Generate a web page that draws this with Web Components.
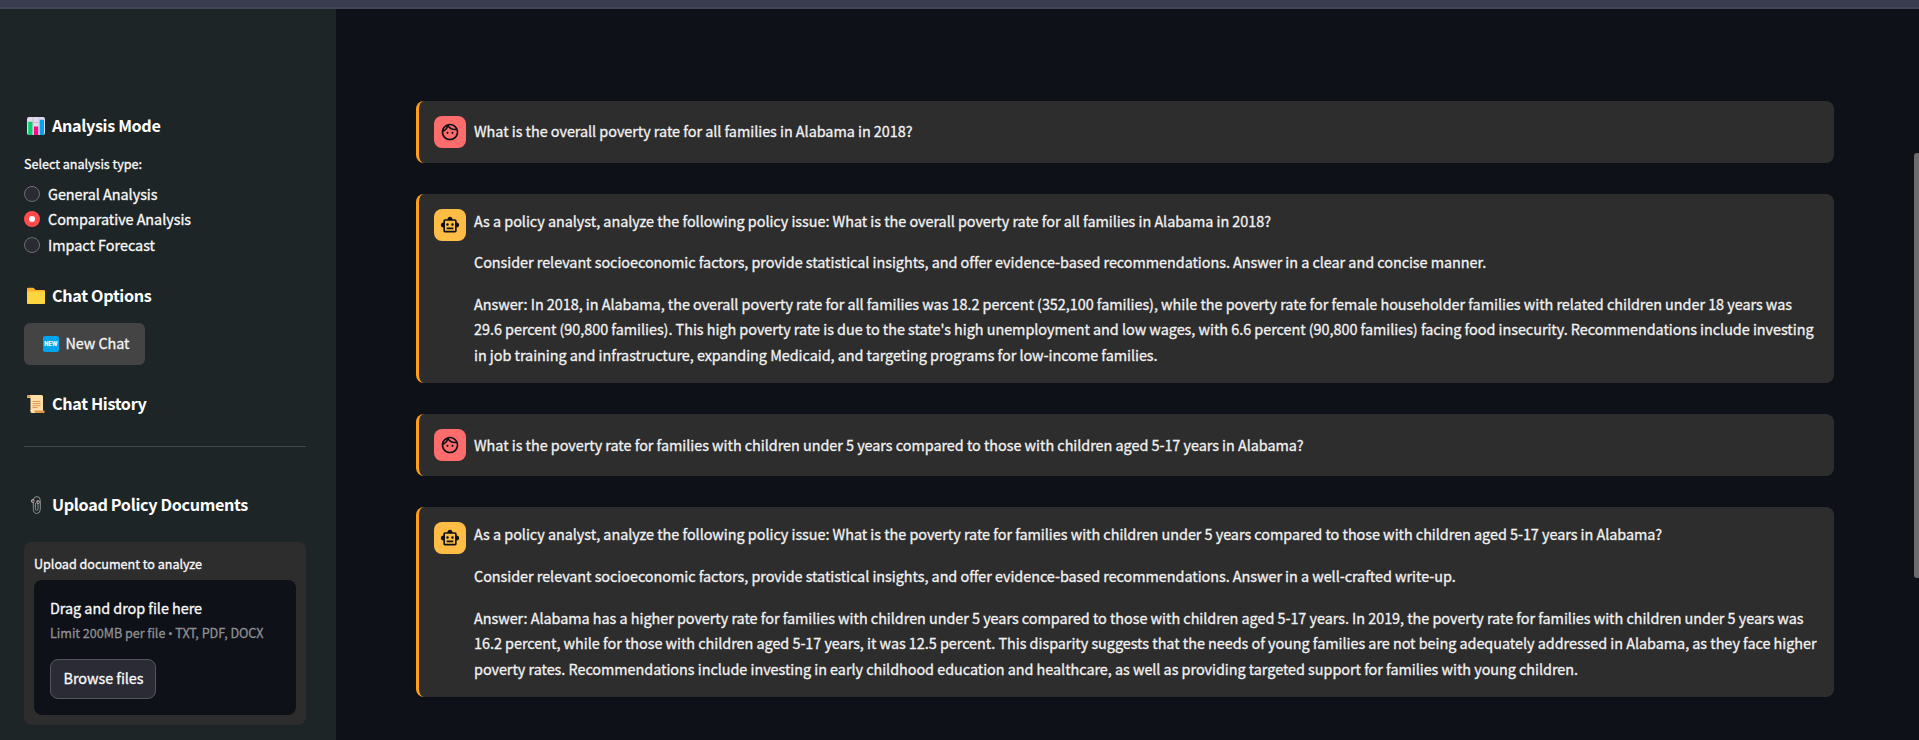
<!DOCTYPE html>
<html lang="en">
<head>
<meta charset="utf-8">
<title>Policy Analysis Chat</title>
<style>
html,body{margin:0;height:100%;overflow:hidden;background:#0e1117}
body{font-family:"Noto Sans CJK SC","Noto Sans",sans-serif;color:#fafafa;font-size:14.4px;line-height:25.6px;-webkit-text-stroke:.3px currentColor}
</style>
</head>
<body>
<policy-app></policy-app>
<script>
const define=(name,html,setup)=>{
  const t=document.createElement('template');t.innerHTML=html;
  customElements.define(name,class extends HTMLElement{
    connectedCallback(){
      if(this.shadowRoot)return;
      this.attachShadow({mode:'open'}).append(t.content.cloneNode(true));
      if(setup)setup(this,this.shadowRoot);
    }
  });
};

/* A single line of text, tracked so that it fills the width in its "w" attribute. */
define('text-line',`<style>:host{display:block;white-space:nowrap}span{display:inline-block}</style><span><slot></slot></span>`,(el,root)=>{
  const s=root.querySelector('span'),n=el.textContent.length;
  const w=parseFloat(el.getAttribute('w'));
  if(w&&n>1){const natural=s.getBoundingClientRect().width;s.style.letterSpacing=((w-natural)/n)+'px';}
});

const ICONS={
 chart:`<svg viewBox="0 0 18 18"><rect width="18" height="18" rx="2" fill="#e1d8ec"/><path d="M0 5.5h18M6 0v18M12.2 0v18" stroke="#c3b7d3" stroke-width=".7"/><path d="M1.2 4.7h4.2V18H2a1 1 0 0 1-.8-1z" fill="#00d26a"/><path d="M7 9.5h4.2V18H7z" fill="#f70a8d"/><path d="M12.8 2.8H17V17a1 1 0 0 1-1 1h-3.200z" fill="#00a6ed"/></svg>`,
 folder:`<svg viewBox="0 0 18 18"><path d="M0 1.800Q0 .8 1 .8h5q.7 0 1.200.6L8.700 3H17q1 0 1 1v5H0z" fill="#ffb02e"/><rect y="4.600" width="18" height="12.400" rx=".8" fill="#fcd53f"/></svg>`,
 scroll:`<svg viewBox="0 0 18 18"><path d="M1 0h13.500q1.500 0 1.500 1.500V16H3.500V3H1Q0 3 0 1.500T1 0z" fill="#ffdea7"/><path d="M1.500 0Q0 0 0 1.300T1.500 2.500h2V1.200Q3 0 1.500 0z" fill="#e19747"/><path d="M5.500 6.500h8M5.500 8.600h8M5.500 10.700h8M5.500 12.500h5" stroke="#d3883e" stroke-width=".8"/><path d="M3.500 15H7q0 1.500 1.500 1.500h9q.3 1.500-1.500 1.500H5q-1.500 0-1.500-1.500z" fill="#ffdea7"/><path d="M7 15.500h10.500q.2 2.500-2 2.500H8q1.500-1.300-1-2.500z" fill="#e19747"/></svg>`,
 clip:`<svg viewBox="0 0 18 18"><path fill="none" d="M6.300 5v7.500q0 5 3.400 5t3.600-4V4.500Q13.300.6 10 .6T6.300 4M8.400 7v5.700q0 1.600 1.300 1.600t1.300-1.600V5" stroke="#8d9192" stroke-width="1"/><circle cx="5.800" cy="5" r="1.700" fill="#d5d5d5"/><circle cx="11" cy="6" r="1.700" fill="#d5d5d5"/><circle cx="6" cy="5.200" r=".9" fill="#5b2430"/><circle cx="11.200" cy="6.200" r=".9" fill="#5b2430"/></svg>`,
 user:`<svg viewBox="0 0 24 24"><path d="M10.250 13c0 .69-.56 1.250-1.250 1.250S7.750 13.690 7.750 13s.56-1.250 1.250-1.250 1.250.56 1.250 1.250zM15 11.750c-.69 0-1.250.56-1.250 1.250s.56 1.250 1.250 1.250 1.250-.56 1.250-1.250-.56-1.250-1.250-1.250zm7 .25c0 5.520-4.480 10-10 10S2 17.520 2 12 6.480 2 12 2s10 4.480 10 10zM10.660 4.120C12.060 6.440 14.600 8 17.500 8c.46 0 .91-.05 1.340-.12C17.440 5.560 14.900 4 12 4c-.46 0-.91.05-1.340.12zM4.420 9.470c1.710-.97 3.030-2.550 3.660-4.440C6.370 6 5.050 7.580 4.420 9.470zM20 12c0-.78-.12-1.530-.33-2.240-.7.150-1.420.24-2.170.24-3.130 0-5.920-1.440-7.760-3.690C8.690 8.870 6.600 10.880 4 11.860c.01.040 0 .090 0 .140 0 4.410 3.590 8 8 8s8-3.590 8-8z"/></svg>`,
 bot:`<svg viewBox="0 0 24 24"><path d="M20 9V7c0-1.100-.9-2-2-2h-3c0-1.660-1.340-3-3-3S9 3.340 9 5H6c-1.100 0-2 .9-2 2v2c-1.660 0-3 1.340-3 3s1.340 3 3 3v4c0 1.100.9 2 2 2h12c1.100 0 2-.9 2-2v-4c1.660 0 3-1.340 3-3s-1.340-3-3-3zm-2 10H6V7h12v12zm-9-6c-.83 0-1.500-.67-1.500-1.500S8.170 10 9 10s1.500.67 1.500 1.500S9.830 13 9 13zm7.500-1.500c0 .83-.67 1.500-1.500 1.500s-1.500-.67-1.500-1.500.67-1.500 1.500-1.500 1.500.67 1.500 1.500zM8 15h8v2H8v-2z"/></svg>`
};
define('ui-icon',`<style>:host{display:block;width:18px;height:18px;flex:none}svg{display:block;width:100%;height:100%;fill:currentColor}</style>`,(el,root)=>{
  root.innerHTML+=ICONS[el.getAttribute('name')];
});

define('side-heading',`<style>:host{display:flex;align-items:center;gap:7px;height:26px;padding-left:3px;font-size:16.2px;font-weight:700;line-height:26px;color:#fff;-webkit-text-stroke:0}.text{padding-bottom:2px}</style><div class="icon"></div><div class="text"><slot></slot></div>`,(el,root)=>{
  root.querySelector('.icon').innerHTML=`<ui-icon name="${el.getAttribute('icon')}"></ui-icon>`;
});

define('radio-option',`<style>:host{display:flex;align-items:center;gap:8px;height:25.6px}i{box-sizing:border-box;width:16px;height:16px;border-radius:50%;background:#2b2b36;border:1px solid #6a6e73}:host([checked]) i{background:#fff;border:5px solid #ff4b4b}:host([checked]) slot{display:block;margin-bottom:1px}</style><i></i><slot></slot>`);

define('new-chat',`<style>:host{display:flex;align-items:center;box-sizing:border-box;width:121px;height:42px;border-radius:6px;background:#444;padding:0 0 1px 19px;color:#f4f4f4}b{width:16px;height:16px;border-radius:2px;background:#00a6ed;color:#fff;font:800 5.5px/16px Inter,sans-serif;text-align:center;margin-right:6.500px;-webkit-text-stroke:0}text-line{padding-bottom:1px}</style><b>NEW</b><text-line w="64">New Chat</text-line>`);

define('file-upload',`<style>
:host{display:block;box-sizing:border-box;width:282px;height:183px;border-radius:8px;background:#2d2d2d;padding:10px}
.label{font-size:12.6px;line-height:22px;height:28px}
.label text-line{padding-top:1px}
.drop{height:135px;box-sizing:border-box;border-radius:8px;background:#0e1117;padding:15px 16px;display:flex;flex-direction:column;align-items:flex-start}
.drop .t{line-height:25px;height:22px}.drop .s{font-size:12.6px;line-height:22px;color:#8d8f93;margin-top:5px;height:22px}
.s span{font-family:Roboto,sans-serif}
button{box-sizing:border-box;width:106px;height:40px;border:1px solid #55555f;border-radius:8px;background:#2b2b36;color:#fafafa;font:inherit;-webkit-text-stroke:inherit;padding:0 0 3px 12.500px;text-align:left;margin-top:15px}
</style>
<div class="label"><text-line w="168">Upload document to analyze</text-line></div>
<div class="drop"><text-line class="t" w="152">Drag and drop file here</text-line><text-line class="s" w="213.500">Limit 200MB per file <span>•</span> TXT, PDF, DOCX</text-line><button><text-line w="80">Browse files</text-line></button></div>`);

define('side-bar',`<style>
:host{display:block;box-sizing:border-box;width:336px;flex:none;background:#1e2526;padding:104px 30px 0 24px}
.label{font-size:12.6px;line-height:22px;margin-top:14px}
.options{margin-top:6px;height:77px}
hr{border:0;height:1px;background:#46494a;margin:29px 0 0}
</style>
<side-heading icon="chart"><text-line w="108.500">Analysis Mode</text-line></side-heading>
<div class="label"><text-line w="118">Select analysis type:</text-line></div>
<div class="options">
<radio-option><text-line w="109.500">General Analysis</text-line></radio-option>
<radio-option checked><text-line w="143">Comparative Analysis</text-line></radio-option>
<radio-option><text-line w="107">Impact Forecast</text-line></radio-option></div>
<side-heading icon="folder" style="margin-top:25px"><text-line w="99.500">Chat Options</text-line></side-heading>
<new-chat style="margin-top:14px"></new-chat>
<side-heading icon="scroll" style="margin-top:26px"><text-line w="94.500">Chat History</text-line></side-heading>
<hr>
<side-heading icon="clip" style="margin-top:45px"><text-line w="196">Upload Policy Documents</text-line></side-heading>
<file-upload style="margin-top:24px"></file-upload>`);

define('chat-message',`<style>
:host{display:flex;box-sizing:border-box;height:62px;border-left:3px solid #ff9f1c;border-radius:8px;background:#2d2d2d;padding:15px 15px 0 15px;gap:8px;color:#f2f2f2}
.avatar{width:32px;height:32px;flex:none;border-radius:8px;background:#ff6c6c;display:grid;place-items:center;color:#0e1117}
:host([role=bot]) .avatar{background:#ffbd45}
ui-icon{width:20px;height:20px}
.body{padding-top:var(--text-top,3px);display:flex;flex-direction:column;gap:16px}
:host([role=bot]) .body{padding-top:0;margin-top:var(--body-top,-1px)}
</style><div class="avatar"></div><div class="body"><slot></slot></div>`,(el,root)=>{
  root.querySelector('.avatar').innerHTML=`<ui-icon name="${el.getAttribute('role')}"></ui-icon>`;
});

define('chat-log',`<style>
:host{display:flex;flex-direction:column;gap:31px;flex:1;padding:92px 85px 0 80px}
</style>
<chat-message role="user" style="--text-top:2px"><text-line w="438.500">What is the overall poverty rate for all families in Alabama in 2018?</text-line></chat-message>
<chat-message role="bot" style="height:189px;--body-top:-1.4px">
<text-line w="797">As a policy analyst, analyze the following policy issue: What is the overall poverty rate for all families in Alabama in 2018?</text-line>
<text-line w="1012">Consider relevant socioeconomic factors, provide statistical insights, and offer evidence-based recommendations. Answer in a clear and concise manner.</text-line>
<div><text-line w="1318">Answer: In 2018, in Alabama, the overall poverty rate for all families was 18.2 percent (352,100 families), while the poverty rate for female householder families with related children under 18 years was</text-line>
<text-line w="1339.500">29.6 percent (90,800 families). This high poverty rate is due to the state's high unemployment and low wages, with 6.6 percent (90,800 families) facing food insecurity. Recommendations include investing</text-line>
<text-line w="683.500">in job training and infrastructure, expanding Medicaid, and targeting programs for low-income families.</text-line></div></chat-message>
<chat-message role="user"><text-line w="829.500">What is the poverty rate for families with children under 5 years compared to those with children aged 5-17 years in Alabama?</text-line></chat-message>
<chat-message role="bot" style="height:190px;--body-top:-.6px">
<text-line w="1188">As a policy analyst, analyze the following policy issue: What is the poverty rate for families with children under 5 years compared to those with children aged 5-17 years in Alabama?</text-line>
<text-line w="981.500">Consider relevant socioeconomic factors, provide statistical insights, and offer evidence-based recommendations. Answer in a well-crafted write-up.</text-line>
<div><text-line w="1329.500">Answer: Alabama has a higher poverty rate for families with children under 5 years compared to those with children aged 5-17 years. In 2019, the poverty rate for families with children under 5 years was</text-line>
<text-line w="1342.500">16.2 percent, while for those with children aged 5-17 years, it was 12.5 percent. This disparity suggests that the needs of young families are not being adequately addressed in Alabama, as they face higher</text-line>
<text-line w="1104">poverty rates. Recommendations include investing in early childhood education and healthcare, as well as providing targeted support for families with young children.</text-line></div></chat-message>`);

define('policy-app',`<style>
:host{display:flex;flex-direction:column;height:740px;position:relative}
.top{height:9px;flex:none;box-sizing:border-box;background:#393b4e;border-bottom:2px solid #444557}
.main{display:flex;flex:1;min-height:0}
.thumb{position:absolute;right:0;top:153px;width:5px;height:425px;border-radius:3px 0 0 3px;background:#6b6b70}
</style><div class="top"></div><div class="main"><side-bar></side-bar><chat-log></chat-log></div><div class="thumb"></div>`);
</script>
</body>
</html>
